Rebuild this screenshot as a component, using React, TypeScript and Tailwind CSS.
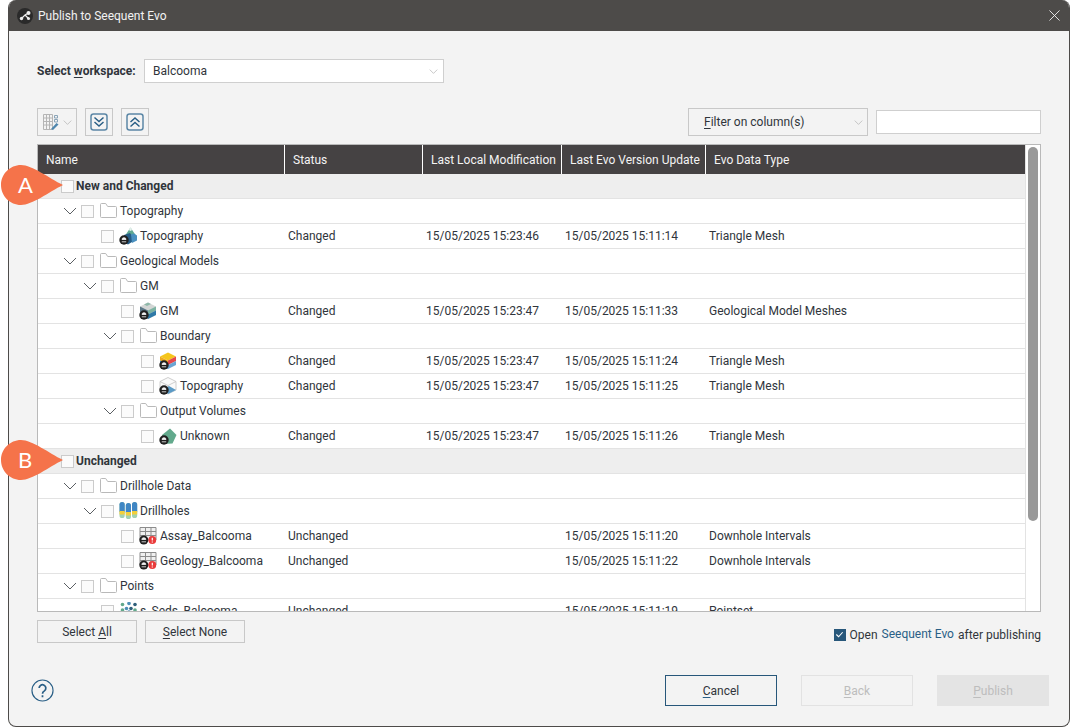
import type { ReactNode } from 'react';

type IconName = 'folder' | 'topo' | 'gm' | 'boundary' | 'wire' | 'unknown' | 'drillholes' | 'table' | 'points';

interface Row {
  name: string;
  depth: number;
  icon?: IconName;
  open?: boolean;
  status?: string;
  local?: string;
  evo?: string;
  type?: string;
}

const ROWS: Row[] = [
  { name: 'New and Changed', depth: 0 },
  { name: 'Topography', depth: 1, icon: 'folder', open: true },
  { name: 'Topography', depth: 2, icon: 'topo', status: 'Changed', local: '15/05/2025 15:23:46', evo: '15/05/2025 15:11:14', type: 'Triangle Mesh' },
  { name: 'Geological Models', depth: 1, icon: 'folder', open: true },
  { name: 'GM', depth: 2, icon: 'folder', open: true },
  { name: 'GM', depth: 3, icon: 'gm', status: 'Changed', local: '15/05/2025 15:23:47', evo: '15/05/2025 15:11:33', type: 'Geological Model Meshes' },
  { name: 'Boundary', depth: 3, icon: 'folder', open: true },
  { name: 'Boundary', depth: 4, icon: 'boundary', status: 'Changed', local: '15/05/2025 15:23:47', evo: '15/05/2025 15:11:24', type: 'Triangle Mesh' },
  { name: 'Topography', depth: 4, icon: 'wire', status: 'Changed', local: '15/05/2025 15:23:47', evo: '15/05/2025 15:11:25', type: 'Triangle Mesh' },
  { name: 'Output Volumes', depth: 3, icon: 'folder', open: true },
  { name: 'Unknown', depth: 4, icon: 'unknown', status: 'Changed', local: '15/05/2025 15:23:47', evo: '15/05/2025 15:11:26', type: 'Triangle Mesh' },
  { name: 'Unchanged', depth: 0 },
  { name: 'Drillhole Data', depth: 1, icon: 'folder', open: true },
  { name: 'Drillholes', depth: 2, icon: 'drillholes', open: true },
  { name: 'Assay_Balcooma', depth: 3, icon: 'table', status: 'Unchanged', evo: '15/05/2025 15:11:20', type: 'Downhole Intervals' },
  { name: 'Geology_Balcooma', depth: 3, icon: 'table', status: 'Unchanged', evo: '15/05/2025 15:11:22', type: 'Downhole Intervals' },
  { name: 'Points', depth: 1, icon: 'folder', open: true },
  { name: 's_Seds_Balcooma', depth: 2, icon: 'points', status: 'Unchanged', evo: '15/05/2025 15:11:19', type: 'Pointset' },
];

const INDENT: Record<number, string> = {
  0: 'pl-[5px]',
  1: 'pl-[25px]',
  2: 'pl-[45px]',
  3: 'pl-[65px]',
  4: 'pl-[85px]',
};

// ── Small drawings ───────────────────────────────────────────────────────────

function Chevron({ className = '', color = '#a9a9a9' }: { className?: string; color?: string }) {
  return (
    <svg viewBox="0 0 14 8" className={className} fill="none" stroke={color} strokeWidth="1">
      <path d="M1 1l6 6 6-6" />
    </svg>
  );
}

function EvoBadge() {
  return (
    <g>
      <circle cx="5" cy="13" r="4.7" fill="#1f1f1f" />
      <path d="M3 12.500a2 1.800 0 0 1 4 0zM2.800 14.800h4.400" fill="#f4f4f4" stroke="#f4f4f4" strokeWidth="0.8" />
    </g>
  );
}

function TreeIcon({ name }: { name: IconName }) {
  if (name === 'folder') {
    return (
      <svg viewBox="0 0 20 18" className="w-[20px] h-[18px] -ml-[1px]" fill="none" stroke="#b9b9b9" strokeWidth="1">
        <path d="M3.500 15.500a1 1 0 0 1-1-1V2.500a1 1 0 0 1 1-1h4.200l2 3h7.800a1 1 0 0 1 1 1v9a1 1 0 0 1-1 1z" />
      </svg>
    );
  }
  return (
    <svg viewBox="0 0 20 18" className="w-[20px] h-[18px]">
      {name === 'topo' && (
        <>
          <path d="M6.500 8l5-7.500 5 7.500-5 2.500z" fill="#5fa892" />
          <path d="M9.800 3l1.700-2.500L13.200 3l-1.700 1z" fill="#e6f1ed" />
          <path d="M5 8l6-2 2 3v6l-4 2.500-4-2z" fill="#255c86" />
          <path d="M12 7.500l3-1 3 2v5l-5 2.500z" fill="#4a90bf" />
        </>
      )}
      {name === 'gm' && (
        <g transform="translate(-1 0)">
          <path d="M2 4.500l8-4 8 4v8.500l-8 4-8-4z" fill="#d3d6d5" />
          <path d="M10 8.500l8-4v4l-8 4z" fill="#7cb3a2" />
          <path d="M10 12.500l8-4v4.500l-8 4z" fill="#2f7aa8" />
          <path d="M2 4.500l8 4V17l-8-4z" fill="#5b7787" />
          <path d="M6 2.500l4-2 3 1.500-4 2z" fill="#8fb9aa" />
        </g>
      )}
      {name === 'boundary' && (
        <g transform="translate(-1 0)">
          <path d="M2 4.500l8-4 8 4-8 4z" fill="#f5c61c" />
          <path d="M2 4.500l8 4v4l-8-4z" fill="#f0aa1d" />
          <path d="M10 8.500l8-4v4.500l-8 4z" fill="#e5484d" />
          <path d="M2 8.500l8 4V17l-8-4z" fill="#3f88c5" />
          <path d="M10 13l8-4v4l-8 4z" fill="#6aa5d3" />
        </g>
      )}
      {name === 'wire' && (
        <g transform="translate(-1 0)">
          <path d="M2 4.500l8-4 8 4V13l-8 4-8-4z" fill="#fafafa" stroke="#c2c2c2" strokeWidth="0.8" />
          <path d="M2 4.500l8 4 8-4M10 8.500v3" fill="none" stroke="#c2c2c2" strokeWidth="0.8" />
          <path d="M6 12.500l5-3.500 7 4-8 4z" fill="#5a9ac6" />
        </g>
      )}
      {name === 'unknown' && <path d="M3 8l8-6.500 6.500 6.500-4 8.500-9 .5z" fill="#62a98c" />}
      {name === 'drillholes' && (
        <>
          {[0.5, 6.800, 13].map((x, i) => (
            <g key={x}>
              <rect x={x} y={i === 1 ? 1 : 0} width="5.200" height="16" rx="2.600" fill="#a3d1b2" />
              <path d={`M${x} ${i === 1 ? 11 : 10}V${i === 1 ? 3.600 : 2.600}a2.600 2.600 0 0 1 5.200 0V${i === 1 ? 11 : 10}z`} fill="#3f86c4" />
              <rect x={x} y={i === 1 ? 10 : 9} width="5.200" height="3.500" fill="#f2cf3b" />
            </g>
          ))}
        </>
      )}
      {name === 'table' && (
        <>
          <path d="M1 .5h16V13H1z" fill="#f0f0f0" stroke="#8c8c8c" strokeWidth="1" />
          <path d="M1 4.500h16M1 8.500h16M6.500.5V13M12 .5V13" stroke="#8c8c8c" strokeWidth="1" />
          <circle cx="4.800" cy="13" r="4.500" fill="#1f1f1f" />
          <path d="M2.800 12.500a2 1.800 0 0 1 4 0zM2.600 14.800h4.400" fill="#f4f4f4" stroke="#f4f4f4" strokeWidth="0.8" />
          <circle cx="13.300" cy="13" r="3.900" fill="#ea3b3b" />
          <path d="M13.300 10.800v2.800M13.300 14.500v1" stroke="#fff" strokeWidth="1.200" />
        </>
      )}
      {name === 'points' && (
        <>
          {[[3.500, 2.500], [10, 1.500], [16, 2.500], [3.500, 8], [7.500, 6.500], [12, 6.500], [16, 8], [10, 10]].map(([x, y], i) => (
            <circle key={i} cx={x} cy={y} r="1.800" fill={i % 3 === 1 ? '#4e8fb8' : i % 3 === 2 ? '#2f5f7a' : '#62a98c'} />
          ))}
        </>
      )}
      {(name === 'topo' || name === 'gm' || name === 'boundary' || name === 'wire' || name === 'unknown') && <EvoBadge />}
    </svg>
  );
}

function Callout({ letter, top }: { letter: string; top: string }) {
  return (
    <div className={`absolute left-[1px] w-[62px] h-[40px] ${top}`}>
      <svg viewBox="0 0 62 40" className="w-[62px] h-[40px]">
        <path d="M20 0C31 0 48 13 62 20 48 27 31 40 20 40 9 40 0 31 0 20S9 0 20 0z" fill="#f5734a" />
      </svg>
      <span className="absolute left-[17px] top-[5px] text-[22px] leading-[30px] text-white font-[family-name:Lato]">
        {letter}
      </span>
    </div>
  );
}

function PlainButton({ children, className = '' }: { children: ReactNode; className?: string }) {
  return (
    <button className={`h-[23px] w-[100px] border border-[#c8c8c8] text-[12px] text-[#30353b] ${className}`}>
      {children}
    </button>
  );
}

function ToolButton({ children, className = '' }: { children: ReactNode; className?: string }) {
  return (
    <button className={`h-[28px] border border-[#c8c8c8] flex items-center justify-center ${className}`}>
      {children}
    </button>
  );
}

function Checkbox() {
  return <span className="w-[13px] h-[13px] shrink-0 border border-[#cbcbcb] bg-[#fbfbfb]" />;
}

function TreeRow({ row }: { row: Row }) {
  const isGroup = row.depth === 0;
  return (
    <div className={`flex h-[25px] shrink-0 items-center border-b border-[#e3e3e3] ${isGroup ? 'bg-[#eeeeee]' : 'bg-white'}`}>
      <div className={`flex w-[247px] items-center ${INDENT[row.depth]}`}>
        <span className="flex w-[18px] shrink-0 items-center">
          {row.open && <Chevron className="w-[14px] h-[8px]" color="#5a5f63" />}
        </span>
        <Checkbox />
        {row.icon && (
          <span className="ml-[5px] w-[20px] h-[18px] flex items-center">
            <TreeIcon name={row.icon} />
          </span>
        )}
        <span className={isGroup ? 'ml-[2px] font-bold' : 'ml-[1px]'}>{row.name}</span>
      </div>
      <div className="w-[138px] pl-[3px]">{row.status}</div>
      <div className="w-[139px] pl-[3px]">{row.local}</div>
      <div className="w-[144px] pl-[3px]">{row.evo}</div>
      <div className="flex-1 pl-[3px]">{row.type}</div>
    </div>
  );
}

export default function App() {
  return (
    <div className="relative w-[1070px] h-[727px] bg-white overflow-hidden font-[family-name:Roboto] text-[12px] text-[#30353b]">
      <div className="ml-[8px] w-[1062px] h-[727px] flex flex-col rounded-lg border-x border-b border-[#4d4b49] bg-[#f3f3f3] overflow-hidden">
        {/* Title bar */}
        <div className="flex h-[31px] shrink-0 items-center bg-[#4d4b49] pl-[8px] pr-[9px] text-[#f2f2f2]">
          <svg viewBox="0 0 16 16" className="w-[16px] h-[16px]">
            <circle cx="8" cy="8" r="8" fill="#2a2a2a" />
            <circle cx="4.500" cy="10.500" r="1.700" fill="#eee" />
            <circle cx="11.500" cy="5" r="2" fill="#eee" />
            <circle cx="11.500" cy="10.500" r="1.500" fill="#eee" />
            <path d="M4.500 10.500L8 7l3.500-2M8 7l3.500 3.500" stroke="#eee" strokeWidth="1.300" />
          </svg>
          <span className="ml-[5px]">Publish to Seequent Evo</span>
          <svg viewBox="0 0 12 12" className="ml-auto w-[11px] h-[11px]" stroke="#eee" strokeWidth="1">
            <path d="M.5.5l11 11M11.500.5l-11 11" />
          </svg>
        </div>

        <div className="flex flex-1 flex-col px-[28px]">
          {/* Workspace */}
          <div className="mt-[28px] flex h-[24px] items-center">
            <span className="w-[107px] font-bold">
              Select <u className="underline-offset-2">w</u>orkspace:
            </span>
            <div className="flex h-[24px] w-[300px] items-center justify-between border border-[#cfcfcf] bg-white pl-[8px] pr-[5px]">
              <span>Balcooma</span>
              <Chevron className="w-[9px] h-[5px]" />
            </div>
          </div>

          {/* Toolbar */}
          <div className="mt-[25px] flex h-[28px] items-center">
            <ToolButton className="w-[40px] gap-[4px]">
              <svg viewBox="0 0 16 16" className="w-[16px] h-[16px]" fill="none" stroke="#b5b5b5" strokeWidth="1">
                <path d="M.5.5h9v15h-9zM.5 4h9M.5 7.500h9M.5 11h9M3.500.5v15M6.500.5v15" />
                <path d="M11.500 1.500h3v2.500h-3zM11.500 5.500h3V8h-3z" stroke="#8aa4b8" />
                <path d="M8 15l5.500-6 2 1.500-5.500 5.500z" fill="#4f86ad" stroke="none" />
              </svg>
              <Chevron className="w-[9px] h-[5px]" />
            </ToolButton>
            <ToolButton className="ml-[8px] w-[28px]">
              <svg viewBox="0 0 18 18" className="w-[18px] h-[18px]" fill="none" stroke="#2a5f86" strokeWidth="1.500">
                <rect x="1" y="1" width="16" height="16" rx="2.500" stroke="#5c87a6" />
                <path d="M4.500 4.500L9 8.500l4.500-4M4.500 9L9 13l4.500-4" />
              </svg>
            </ToolButton>
            <ToolButton className="ml-[8px] w-[28px]">
              <svg viewBox="0 0 18 18" className="w-[18px] h-[18px]" fill="none" stroke="#2a5f86" strokeWidth="1.500">
                <rect x="1" y="1" width="16" height="16" rx="2.500" stroke="#5c87a6" />
                <path d="M4.500 9L9 5l4.500 4M4.500 13.500L9 9.500l4.500 4" />
              </svg>
            </ToolButton>
            <div className="ml-auto flex h-[28px] w-[180px] items-center justify-between border border-[#c8c8c8] pl-[15px] pr-[4px]">
              <span>
                <u className="underline-offset-2">F</u>ilter on column(s)
              </span>
              <Chevron className="w-[9px] h-[5px]" />
            </div>
            <div className="ml-[8px] h-[24px] w-[165px] border border-[#cfcfcf] bg-white" />
          </div>

          {/* Table */}
          <div className="mt-[8px] flex h-[468px] border border-[#b9b9b9] bg-white overflow-hidden">
            <div className="flex w-[987px] flex-col overflow-hidden">
              <div className="flex h-[29px] shrink-0 items-center bg-[#454243] text-[#f4f4f4]">
                <div className="flex h-full w-[247px] items-center border-r border-white pl-[8px]">Name</div>
                <div className="flex h-full w-[138px] items-center border-r border-white pl-[8px]">Status</div>
                <div className="flex h-full w-[139px] items-center border-r border-white pl-[8px]">Last Local Modification</div>
                <div className="flex h-full w-[144px] items-center border-r border-white pl-[8px]">Last Evo Version Update</div>
                <div className="flex h-full flex-1 items-center pl-[8px]">Evo Data Type</div>
              </div>
              {ROWS.map((row, i) => (
                <TreeRow key={i} row={row} />
              ))}
            </div>
            <div className="w-[15px] border-l border-[#e3e3e3] pl-[2px] pt-[2px]">
              <div className="h-[374px] w-[10px] rounded-[5px] bg-[#999999]" />
            </div>
          </div>

          {/* Selection buttons */}
          <div className="mt-[8px] flex h-[23px] items-center gap-[8px]">
            <PlainButton>
              Select <u className="underline-offset-2">A</u>ll
            </PlainButton>
            <PlainButton>
              <u className="underline-offset-2">S</u>elect None
            </PlainButton>
            <div className="ml-auto mt-[6px] flex items-center">
              <span className="flex h-[12px] w-[12px] items-center justify-center bg-[#27577a]">
                <svg viewBox="0 0 10 10" className="w-[9px] h-[9px]" fill="none" stroke="#fff" strokeWidth="1.200">
                  <path d="M1.500 5l2.500 2.500 4.500-5" />
                </svg>
              </span>
              <span className="ml-[4px]">Open</span>
              <span className="ml-[4px] -translate-y-[1px] text-[#2a5f86]">Seequent Evo</span>
              <span className="ml-[4px]">after publishing</span>
            </div>
          </div>

          {/* Footer */}
          <div className="mt-[32px] -mr-[8px] flex h-[31px] items-center">
            <svg viewBox="0 0 24 24" className="-ml-[6px] w-[23px] h-[23px]" fill="none" stroke="#2a5f86" strokeWidth="1.200">
              <circle cx="12" cy="12" r="11" />
              <path d="M8.500 9.500a3.500 3.500 0 1 1 5.500 2.900c-1.300.8-2 1.400-2 3" strokeWidth="1.800" />
              <path d="M12 17v2" strokeWidth="1.800" />
            </svg>
            <button className="ml-auto h-[31px] w-[112px] border border-[#27577a] text-[#30353b]">
              <u className="underline-offset-2 decoration-[#2a5f86]">C</u>ancel
            </button>
            <button className="ml-[24px] h-[31px] w-[112px] border border-[#e2e2e2] text-[#bdbdbd]">
              <u className="underline-offset-2">B</u>ack
            </button>
            <button className="ml-[24px] h-[31px] w-[112px] bg-[#e4e4e4] text-[#bdbdbd]">
              <u className="underline-offset-2">P</u>ublish
            </button>
          </div>
        </div>
      </div>

      <Callout letter="A" top="top-[165px]" />
      <Callout letter="B" top="top-[440px]" />
    </div>
  );
}
